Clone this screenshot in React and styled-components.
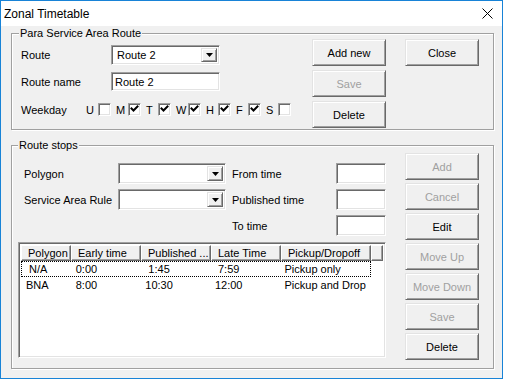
import styled, { createGlobalStyle } from "styled-components"

const Global = createGlobalStyle`
    body {
        margin : 0;
        background : #ffffff;
        font-family : "Liberation Sans", Arial, sans-serif;
        font-size : 11px;
        color : #000;
    }
    * { box-sizing : border-box; }
`

const Window = styled.div`
    width : 503px;
    height : 379px;
    border : 1px solid #1883d7;
    display : flex;
    flex-direction : column;
`
const TitleBar = styled.div`
    height : 25px;
    background : #fff;
    display : flex;
    align-items : center;
    justify-content : space-between;
    padding : 0 9px 0 3px;
    font-size : 12px;
`
const Body = styled.div`
    flex : 1;
    background : #f0f0f0;
    padding : 7px 8px 0 10px;
    display : flex;
    flex-direction : column;
`
const Group = styled.div`
    position : relative;
    height : ${p => p.$h}px;
    margin-top : ${p => p.$mt || 0}px;
    border : 1px solid #a0a0a0;
    box-shadow : inset 1px 1px 0 #fff, 1px 1px 0 #fff;
    display : flex;
    align-items : flex-start;
`
const Legend = styled.span`
    position : absolute;
    top : -7px;
    left : ${p => p.$left}px;
    padding : 0 1px;
    line-height : 13px;
    background : #f0f0f0;
`
const FormArea = styled.div`
    width : ${p => p.$w}px;
    padding : ${p => p.$pad};
    display : flex;
    flex-direction : column;
`
const Row = styled.div`
    display : flex;
    align-items : center;
    height : ${p => p.$h}px;
    margin-top : ${p => p.$mt}px;
`
const Label = styled.div`
    width : ${p => p.$w}px;
    white-space : nowrap;
`
const sunken = `
    background : #fff;
    border : 1px solid;
    border-color : #a0a0a0 #fff #fff #a0a0a0;
    box-shadow : inset 1px 1px 0 #696969, inset -1px -1px 0 #e3e3e3;
`
const Combo = styled.div`
    ${sunken}
    width : ${p => p.$w}px;
    height : ${p => p.$h}px;
    display : flex;
    align-items : center;
    justify-content : space-between;
    padding : 2px 2px 2px 5px;
`
const DropButton = styled.div`
    width : 16px;
    height : 100%;
    background : #f0f0f0;
    border : 1px solid;
    border-color : #e3e3e3 #696969 #696969 #e3e3e3;
    box-shadow : inset 1px 1px 0 #fff, inset -1px -1px 0 #a0a0a0;
    display : flex;
    align-items : center;
    justify-content : center;
`
const TextBox = styled.div`
    ${sunken}
    width : ${p => p.$w}px;
    height : ${p => p.$h}px;
    display : flex;
    align-items : center;
    padding-left : 3px;
`
const ButtonCol = styled.div`
    display : flex;
    flex-direction : column;
    gap : ${p => p.$gap}px;
    margin-left : ${p => p.$ml}px;
    padding-top : ${p => p.$pt}px;
`
const Button = styled.button`
    width : 74px;
    height : 27px;
    padding : 0;
    font-family : inherit;
    font-size : 11px;
    color : #000;
    background : #f0f0f0;
    border : 1px solid;
    border-color : #e3e3e3 #696969 #696969 #e3e3e3;
    box-shadow : inset 1px 1px 0 #fff, inset -1px -1px 0 #a0a0a0;
    &:disabled {
        color : #a0a0a0;
    }
`
const Days = styled.div`
    display : grid;
    grid-template-columns : repeat(7, 30px);
`
const Day = styled.div`
    display : flex;
    align-items : center;
`
const DayLetter = styled.span`
    width : 12px;
`
const CheckBox = styled.div`
    ${sunken}
    width : 13px;
    height : 13px;
    display : flex;
    align-items : center;
    justify-content : center;
`
const StopForm = styled.div`
    display : grid;
    grid-template-columns : 94px 108px 110px 50px;
    grid-template-rows : 21px 21px 21px;
    row-gap : 5px;
    margin-left : 6px;
    align-items : center;
`
const SideLabel = styled.div`
    padding-left : 6px;
    white-space : nowrap;
`
const ListView = styled.div`
    ${sunken}
    margin-top : 6px;
    height : 116px;
    padding : 2px;
    display : flex;
    flex-direction : column;
`
const HeaderRow = styled.div`
    display : flex;
    height : 16px;
`
const HeaderCell = styled.div`
    width : ${p => p.$w ? p.$w + "px" : "auto"};
    flex : ${p => p.$w ? "none" : "1"};
    padding-left : 6px;
    line-height : 14px;
    white-space : nowrap;
    overflow : hidden;
    background : #f0f0f0;
    border : 1px solid;
    border-color : #fff #696969 #696969 #fff;
    box-shadow : inset -1px -1px 0 #a0a0a0;
`
const DataRow = styled.div`
    display : flex;
    width : 350px;
    height : 16px;
    align-items : center;
    border : 1px ${p => p.$focus ? "dotted #000" : "solid transparent"};
`
const DataCell = styled.div`
    width : ${p => p.$w}px;
    padding-left : 4px;
    white-space : pre;
`

const columns = [
    { title : "Polygon", w : 50 },
    { title : "Early time", w : 70 },
    { title : "Published ...", w : 70 },
    { title : "Late Time", w : 70 },
    { title : "Pickup/Dropoff", w : 90 },
]
const rows = [
    ["\u00a0N/A", "0:00", "\u00a01:45", "\u00a07:59", "Pickup only"],
    ["BNA", "8:00", "10:30", "12:00", "Pickup and Drop"],
]
const days = [
    ["U", false], ["M", true], ["T", true], ["W", true], ["H", true], ["F", true], ["S", false],
]

const Arrow = () => (
    <svg width="7" height="4" viewBox="0 0 7 4"><path d="M0 0h7L3.5 4z" fill="#000" /></svg>
)
const Check = ({ on }) => (
    on ? <svg width="9" height="9" viewBox="0 0 9 9">
        <path d="M1.5 3.5l2 2 4-4" fill="none" stroke="#000" strokeWidth="2" strokeLinecap="square" />
    </svg> : null
)

export default function App(){
    return(
        <Window>
            <Global />
            <TitleBar>
                <span>Zonal Timetable</span>
                <svg width="11" height="11" viewBox="0 0 11 11">
                    <path d="M0.5 0.5l10 10M10.5 0.5l-10 10" stroke="#000" strokeWidth="1" />
                </svg>
            </TitleBar>
            <Body>
                {/* 상단 그룹 */}
                <Group $h={97}>
                    <Legend $left={7}>Para Service Area Route</Legend>
                    <FormArea $w={300} $pad="5px 0 0 9px">
                        <Row $h={20} $mt={6}>
                            <Label $w={90}>Route</Label>
                            <Combo $w={109} $h={20}>Route 2<DropButton><Arrow /></DropButton></Combo>
                        </Row>
                        <Row $h={19} $mt={7}>
                            <Label $w={90}>Route name</Label>
                            <TextBox $w={109} $h={19}>Route 2</TextBox>
                        </Row>
                        <Row $h={13} $mt={12}>
                            <Label $w={65}>Weekday</Label>
                            <Days>
                                {days.map(([d, on]) => <Day key={d}>
                                    <DayLetter>{d}</DayLetter>
                                    <CheckBox><Check on={on} /></CheckBox>
                                </Day>)}
                            </Days>
                        </Row>
                    </FormArea>
                    <ButtonCol $gap={4} $ml={0} $pt={5}>
                        <Button>Add new</Button>
                        <Button disabled>Save</Button>
                        <Button>Delete</Button>
                    </ButtonCol>
                    <ButtonCol $gap={4} $ml={19} $pt={5}>
                        <Button>Close</Button>
                    </ButtonCol>
                </Group>

                {/* 하단 그룹 */}
                <Group $h={224} $mt={15}>
                    <Legend $left={6}>Route stops</Legend>
                    <FormArea $w={374} $pad="17px 0 0 6px">
                        <StopForm>
                            <div>Polygon</div>
                            <Combo $w={108} $h={21}><span /><DropButton><Arrow /></DropButton></Combo>
                            <SideLabel>From time</SideLabel>
                            <TextBox $w={50} $h={21} />
                            <div>Service Area Rule</div>
                            <Combo $w={108} $h={21}><span /><DropButton><Arrow /></DropButton></Combo>
                            <SideLabel>Published time</SideLabel>
                            <TextBox $w={50} $h={21} />
                            <div />
                            <div />
                            <SideLabel>To time</SideLabel>
                            <TextBox $w={50} $h={21} />
                        </StopForm>
                        <ListView>
                            <HeaderRow>
                                {columns.map(c => <HeaderCell key={c.title} $w={c.w}>{c.title}</HeaderCell>)}
                                <HeaderCell />
                            </HeaderRow>
                            {rows.map((r, i) => <DataRow key={i} $focus={i === 0}>
                                {r.map((v, j) => <DataCell key={j} $w={columns[j].w}>{v}</DataCell>)}
                            </DataRow>)}
                        </ListView>
                    </FormArea>
                    <ButtonCol $gap={3} $ml={19} $pt={7}>
                        <Button disabled>Add</Button>
                        <Button disabled>Cancel</Button>
                        <Button>Edit</Button>
                        <Button disabled>Move Up</Button>
                        <Button disabled>Move Down</Button>
                        <Button disabled>Save</Button>
                        <Button>Delete</Button>
                    </ButtonCol>
                </Group>
            </Body>
        </Window>
    );
}
